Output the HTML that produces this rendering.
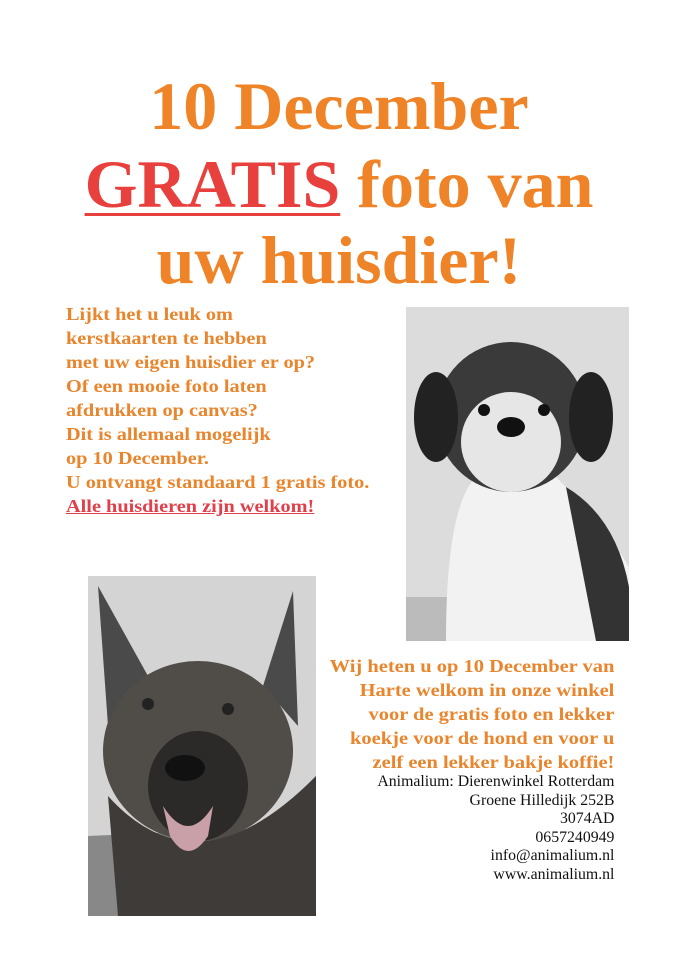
<!DOCTYPE html>
<html><head><meta charset="utf-8"><style>
body{margin:0;width:678px;height:960px;background:#fff;position:relative;overflow:hidden;font-family:"Liberation Serif",serif}
.t{position:absolute;left:0;width:678px;text-align:center;font-weight:bold;color:#ee8427;font-size:68px;line-height:68px;white-space:nowrap}
.o{color:#e8852d;font-weight:bold;font-size:17.5px;line-height:24px;position:absolute;white-space:nowrap}
.a{position:absolute;right:64px;text-align:right;font-size:15.5px;line-height:18.5px;color:#111;white-space:nowrap;transform:scaleX(1.02);transform-origin:right top}
</style></head><body>
<div class="t" style="top:72px">10 December</div>
<div class="t" style="top:150px"><span style="color:#e8403c;text-decoration:underline;text-decoration-thickness:3px;text-underline-offset:6px">GRATIS</span> foto van</div>
<div class="t" style="top:226px">uw huisdier!</div>

<div class="o" style="left:66px;top:302px;transform:scaleX(1.16);transform-origin:left top">Lijkt het u leuk om<br>kerstkaarten te hebben<br>met uw eigen huisdier er op?<br>Of een mooie foto laten<br>afdrukken op canvas?<br>Dit is allemaal mogelijk<br>op 10 December.<br>U ontvangt standaard 1 gratis foto.<br><span style="color:#e0404a;text-decoration:underline">Alle huisdieren zijn welkom!</span></div>

<svg style="position:absolute;left:406px;top:307px" width="223" height="334" viewBox="0 0 223 334">
<rect width="223" height="334" fill="#dcdcdc"/>
<rect y="290" width="223" height="44" fill="#bbb"/>
<path d="M40 334 Q40 200 70 170 L150 170 Q200 220 223 260 L223 334Z" fill="#f2f2f2"/>
<path d="M160 180 Q210 210 223 280 L223 334 L190 334Z" fill="#333"/>
<ellipse cx="105" cy="110" rx="75" ry="75" fill="#3a3a3a"/>
<ellipse cx="30" cy="110" rx="22" ry="45" fill="#222"/>
<ellipse cx="185" cy="110" rx="22" ry="45" fill="#222"/>
<ellipse cx="105" cy="135" rx="50" ry="50" fill="#e6e6e6"/>
<ellipse cx="105" cy="120" rx="14" ry="10" fill="#111"/>
<circle cx="78" cy="103" r="6" fill="#111"/><circle cx="138" cy="103" r="6" fill="#111"/>
</svg>

<svg style="position:absolute;left:88px;top:576px" width="228" height="340" viewBox="0 0 228 340">
<rect width="228" height="340" fill="#d4d4d4"/>
<path d="M0 260 L228 250 L228 340 L0 340Z" fill="#888"/>
<path d="M10 10 L60 100 L20 150 Z" fill="#4a4a4a"/>
<path d="M205 15 L175 110 L210 150 Z" fill="#4a4a4a"/>
<ellipse cx="110" cy="175" rx="95" ry="90" fill="#504c48"/>
<path d="M20 220 Q110 320 228 200 L228 340 L30 340Z" fill="#3e3b38"/>
<ellipse cx="110" cy="210" rx="50" ry="55" fill="#2c2a28"/>
<ellipse cx="97" cy="192" rx="20" ry="13" fill="#111"/>
<path d="M75 230 Q100 270 125 230 L120 260 Q100 290 82 260Z" fill="#caa0a8"/>
<circle cx="60" cy="128" r="6" fill="#222"/><circle cx="140" cy="133" r="6" fill="#222"/>
</svg>

<div class="o" style="right:64px;top:654px;text-align:right;transform:scaleX(1.17);transform-origin:right top">Wij heten u op 10 December van<br>Harte welkom in onze winkel<br>voor de gratis foto en lekker<br>koekje voor de hond en voor u<br>zelf een lekker bakje koffie!</div>
<div class="a" style="top:773px">Animalium: Dierenwinkel Rotterdam<br>Groene Hilledijk 252B<br>3074AD<br>0657240949<br>info@animalium.nl<br>www.animalium.nl</div>
</body></html>
